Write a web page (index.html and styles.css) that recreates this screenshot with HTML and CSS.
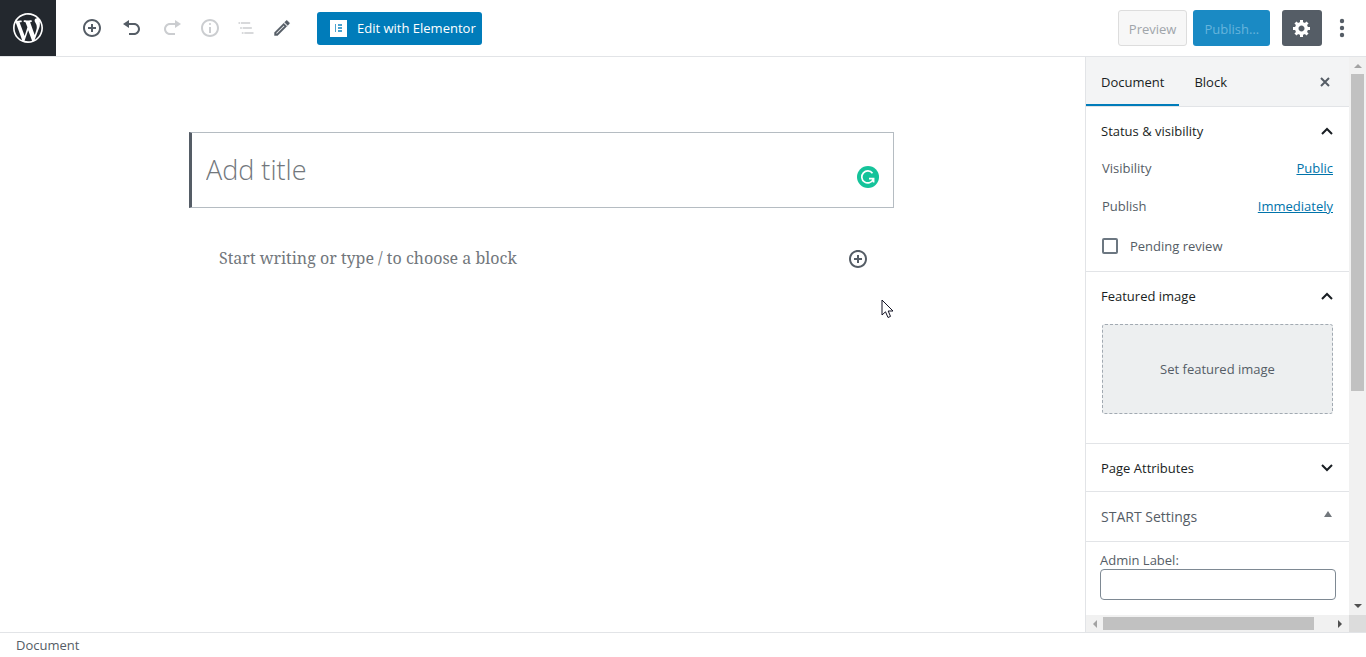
FILE: index.html
```html
<!DOCTYPE html>
<html lang="en">
<head>
    <meta charset="UTF-8">
    <meta name="viewport" content="width=device-width, initial-scale=1.0">
    <title>Add New Page</title>
    <link rel="stylesheet" href="styles.css">
</head>
<body>
    <div class="editor">
        <header class="header">
            <a class="wp-logo" href="#" aria-label="View Pages">
                <svg width="36" height="36" viewBox="-2 -2 24 24"><path d="M20 10c0-5.51-4.49-10-10-10C4.48 0 0 4.49 0 10c0 5.52 4.48 10 10 10 5.51 0 10-4.48 10-10zM7.78 15.37L4.37 6.22c.55-.02 1.17-.08 1.17-.08.5-.06.44-1.13-.06-1.11 0 0-1.45.11-2.37.11-.18 0-.37 0-.58-.01C4.12 2.69 6.87 1.11 10 1.11c2.33 0 4.45.87 6.05 2.34-.68-.11-1.65.39-1.65 1.58 0 .74.45 1.36.9 2.1.35.61.55 1.36.55 2.46 0 1.49-1.4 5-1.4 5l-3.03-8.37c.54-.02.82-.17.82-.17.5-.05.44-1.25-.06-1.22 0 0-1.44.12-2.38.12-.87 0-2.33-.12-2.33-.12-.5-.03-.56 1.2-.06 1.22l.92.08 1.26 3.41zM17.41 10c.24-.64.74-1.87.43-4.25.7 1.29 1.05 2.71 1.05 4.25 0 3.29-1.73 6.24-4.4 7.78.97-2.59 1.94-5.2 2.92-7.78zM6.1 18.09C3.12 16.65 1.11 13.53 1.11 10c0-1.3.23-2.48.72-3.59C3.25 10.3 4.67 14.2 6.1 18.09zm4.03-6.63l2.58 6.98c-.86.29-1.76.45-2.71.45-.79 0-1.57-.11-2.29-.33.81-2.38 1.62-4.74 2.42-7.1z"/></svg>
            </a>
            <div class="toolbar">
                <div class="history">
                    <button class="icon-button" aria-label="Add block">
                        <svg width="20" height="20" viewBox="0 0 20 20"><path d="M10 1c-5 0-9 4-9 9s4 9 9 9 9-4 9-9-4-9-9-9zm0 16c-3.9 0-7-3.1-7-7s3.1-7 7-7 7 3.1 7 7-3.1 7-7 7zm1-11H9v3H6v2h3v3h2v-3h3V9h-3V6z"/></svg>
                    </button>
                    <button class="icon-button" aria-label="Undo">
                        <svg width="20" height="20" viewBox="0 0 20 20"><path d="M12 5H7V2L1 6l6 4V7h5c2.200 0 4 1.800 4 4s-1.800 4-4 4H7v2h5c3.300 0 6-2.700 6-6s-2.700-6-6-6z"/></svg>
                    </button>
                    <button class="icon-button" aria-label="Redo" disabled>
                        <svg width="20" height="20" viewBox="0 0 20 20"><path d="M8 5h5V2l6 4-6 4V7H8c-2.200 0-4 1.800-4 4s1.800 4 4 4h5v2H8c-3.300 0-6-2.700-6-6s2.700-6 6-6z"/></svg>
                    </button>
                </div>
                <div class="tools">
                    <button class="icon-button" aria-label="Content structure" disabled>
                        <svg width="20" height="20" viewBox="0 0 20 20"><path d="M9 15h2V9H9v6zm1-10c-.5 0-1 .5-1 1s.5 1 1 1 1-.5 1-1-.5-1-1-1zm0-4c-5 0-9 4-9 9s4 9 9 9 9-4 9-9-4-9-9-9zm0 16c-3.9 0-7-3.1-7-7s3.1-7 7-7 7 3.1 7 7-3.1 7-7 7z"/></svg>
                    </button>
                    <button class="icon-button" aria-label="Block navigation" disabled>
                        <svg width="20" height="20" viewBox="0 0 24 24"><path d="M5 5H3v2h2V5zm3 8h11v-2H8v2zm9-8H6v2h11V5zM7 11H5v2h2v-2zm0 8h2v-2H7v2zm3-2v2h11v-2H10z"/></svg>
                    </button>
                    <button class="icon-button" aria-label="Modes">
                        <svg width="20" height="20" viewBox="0 0 24 24"><path stroke="currentColor" stroke-width=".5" d="M14.060 9.020l.92.92L5.920 19H5v-.92l9.060-9.060M17.660 3c-.25 0-.51.1-.7.29l-1.830 1.830 3.750 3.750 1.830-1.830c.39-.39.39-1.020 0-1.410l-2.340-2.340c-.2-.2-.45-.29-.71-.29zm-3.600 3.190L3 17.250V21h3.750L17.810 9.940l-3.750-3.750z"/></svg>
                    </button>
                </div>
                <button class="button button-elementor">
                    <svg width="17" height="17" viewBox="0 0 17 17"><path fill="#fff" d="M0 0h17v17H0z"/><path fill="#4ba3cf" d="M5 4h1v8H5zM8 4h4v2H8zM8 7h4v2H8zM8 10h4v2H8z"/></svg>
                    Edit with Elementor
                </button>
            </div>
            <div class="settings">
                <button class="button button-preview" disabled>Preview</button>
                <button class="button button-publish" disabled>Publish…</button>
                <button class="button-gear" aria-label="Settings">
                    <svg width="20" height="20" viewBox="0 0 20 20"><path d="M18 12h-2.180c-.17.7-.44 1.350-.81 1.930l1.540 1.540-2.100 2.100-1.540-1.540c-.58.36-1.230.63-1.910.79V19H8v-2.180c-.68-.16-1.330-.43-1.910-.79l-1.540 1.540-2.120-2.120 1.540-1.540c-.36-.58-.63-1.230-.79-1.910H1V9.030h2.170c.16-.7.44-1.350.8-1.940L2.430 5.550l2.100-2.100 1.540 1.540c.58-.37 1.240-.64 1.930-.81V2h3v2.180c.68.16 1.330.43 1.910.79l1.540-1.540 2.120 2.120-1.540 1.540c.36.59.64 1.240.8 1.940H18V12zm-8.500 1.500c1.660 0 3-1.340 3-3s-1.340-3-3-3-3 1.340-3 3 1.340 3 3 3z"/></svg>
                </button>
                <button class="button-more" aria-label="More tools &amp; options">
                    <svg width="6" height="20" viewBox="0 0 6 20"><circle cx="3" cy="3" r="2.200"/><circle cx="3" cy="10" r="2.200"/><circle cx="3" cy="17" r="2.200"/></svg>
                </button>
            </div>
        </header>

        <div class="body">
            <main class="content">
                <div class="title-box">
                    <input class="title-input" type="text" placeholder="Add title" aria-label="Add title">
                    <svg class="grammarly" width="22" height="22" viewBox="0 0 22 22"><circle cx="11" cy="11" r="11" fill="#15c39a"/><path fill="none" stroke="#fff" stroke-width="1.700" d="M15.500 7.200A6 6 0 1 0 16.200 13.500M12 12.600h4.600v4"/></svg>
                </div>
                <div class="appender">
                    <input class="appender-input" type="text" placeholder="Start writing or type / to choose a block" aria-label="Add block">
                    <button class="icon-button" aria-label="Add block">
                        <svg width="20" height="20" viewBox="0 0 20 20"><path d="M10 1c-5 0-9 4-9 9s4 9 9 9 9-4 9-9-4-9-9-9zm0 16c-3.9 0-7-3.1-7-7s3.1-7 7-7 7 3.1 7 7-3.1 7-7 7zm1-11H9v3H6v2h3v3h2v-3h3V9h-3V6z"/></svg>
                    </button>
                </div>
            </main>

            <aside class="sidebar">
                <div class="sidebar-inner">
                    <div class="tabs">
                        <button class="tab active">Document</button>
                        <button class="tab">Block</button>
                        <button class="close" aria-label="Close settings">
                            <svg width="12" height="12" viewBox="0 0 12 12"><path d="M2 2l8 8M10 2l-8 8"/></svg>
                        </button>
                    </div>

                    <section class="panel">
                        <button class="panel-title">Status &amp; visibility
                            <svg class="chevron" width="14" height="10" viewBox="0 0 14 10"><path d="M2 8l5-5 5 5"/></svg>
                        </button>
                        <div class="row"><span>Visibility</span><a href="#">Public</a></div>
                        <div class="row"><span>Publish</span><a href="#">Immediately</a></div>
                        <div class="check-row">
                            <input type="checkbox" id="pending">
                            <label for="pending">Pending review</label>
                        </div>
                    </section>

                    <section class="panel panel-image">
                        <button class="panel-title">Featured image
                            <svg class="chevron" width="14" height="10" viewBox="0 0 14 10"><path d="M2 8l5-5 5 5"/></svg>
                        </button>
                        <button class="set-image">Set featured image</button>
                    </section>

                    <section class="panel">
                        <button class="panel-title">Page Attributes
                            <svg class="chevron" width="14" height="10" viewBox="0 0 14 10"><path d="M2 2l5 5 5-5"/></svg>
                        </button>
                    </section>

                    <section class="panel">
                        <button class="panel-title metabox-title">START Settings
                            <svg class="toggle" width="8" height="6" viewBox="0 0 8 6"><path d="M4 0l4 6H0z"/></svg>
                        </button>
                    </section>
                    <div class="metabox">
                        <label for="admin-label">Admin Label:</label>
                        <input type="text" id="admin-label">
                    </div>
                </div>

                <!-- scrollbars -->
                <div class="scroll-y">
                    <svg width="8" height="4" viewBox="0 0 8 4"><path fill="#a3a3a3" d="M4 0l4 4H0z"/></svg>
                    <div class="track"><div class="thumb"></div></div>
                    <svg width="8" height="4" viewBox="0 0 8 4"><path fill="#505050" d="M0 0h8L4 4z"/></svg>
                </div>
                <div class="scroll-x">
                    <svg width="4" height="8" viewBox="0 0 4 8"><path fill="#a3a3a3" d="M4 0v8L0 4z"/></svg>
                    <div class="track"><div class="thumb"></div></div>
                    <svg width="4" height="8" viewBox="0 0 4 8"><path fill="#505050" d="M0 0l4 4-4 4z"/></svg>
                </div>
                <div class="corner"></div>
            </aside>
        </div>

        <footer class="footer">Document</footer>
    </div>
    <svg class="cursor" width="13" height="20" viewBox="0 0 13 20"><path fill="#fff" stroke="#111122" d="M1 1v15l3.500-3.200L7 18.500l2.500-1.100L7.200 12H12z"/></svg>
</body>
</html>
```
FILE: styles.css
```css
* {
    box-sizing: border-box;
}

body {
    margin: 0;
    font-family: "Open Sans", "Noto Sans", sans-serif;
    font-size: 13px;
    line-height: 18px;
    color: #555d66;
    background: #fff;
}

button,
input {
    margin: 0;
    padding: 0;
    border: none;
    background: none;
    font: inherit;
    color: inherit;
}

svg {
    display: block;
    flex: none;
    fill: currentColor;
}

a {
    color: #0073aa;
}

.editor {
    display: flex;
    flex-direction: column;
    height: 100vh;
}

/* Header */
.header {
    display: flex;
    align-items: center;
    justify-content: space-between;
    height: 57px;
    border-bottom: 1px solid #e2e4e7;
}

.wp-logo {
    display: flex;
    align-items: center;
    justify-content: center;
    width: 56px;
    height: 56px;
    background: #23282e;
    color: #fff;
}

.toolbar {
    display: flex;
    align-items: center;
    flex: 1;
    padding-left: 18px;
}

.history {
    display: flex;
    gap: 4px;
    margin-right: 2px;
}

.tools {
    display: flex;
    margin-right: 17px;
}

.icon-button {
    display: flex;
    align-items: center;
    justify-content: center;
    width: 36px;
    height: 36px;
    color: #555d66;
}

.icon-button:disabled {
    opacity: 0.3;
}

.button {
    display: flex;
    align-items: center;
    border-radius: 3px;
    white-space: nowrap;
}

.button-elementor {
    gap: 10px;
    height: 33px;
    padding: 0 6px 0 13px;
    background: #007cba;
    color: #fff;
}

.settings {
    display: flex;
    align-items: center;
}

.button-preview,
.button-publish {
    height: 36px;
    padding: 2px 11px 0;
    margin-right: 6px;
}

.button-preview {
    padding: 2px 10px 0;
    border: 1px solid #ddd;
    background: #f7f7f7;
    color: #a0a5aa;
}

.button-publish {
    margin-right: 12px;
    background: #1a8ac4;
    color: #66b4dc;
}

.button-gear {
    display: flex;
    align-items: center;
    justify-content: center;
    width: 40px;
    height: 36px;
    border-radius: 3px;
    background: #555d66;
    color: #fff;
}

.button-more {
    display: flex;
    justify-content: center;
    width: 40px;
    margin-right: 4px;
}

/* Content */
.body {
    display: flex;
    flex: 1;
    min-height: 0;
}

.content {
    flex: 1;
    padding: 75px 17px 0 15px;
}

.title-box {
    display: flex;
    max-width: 705px;
    height: 76px;
    margin: 0 auto;
    padding: 0 14px;
    border: 1px solid #b5bcc2;
    border-left: 3px solid #555d66;
}

.title-input {
    flex: 1;
    padding-bottom: 2px;
    font-size: 27px;
    font-weight: 300;
}

.title-input::placeholder,
.appender-input::placeholder {
    color: #72777c;
    opacity: 1;
}

.grammarly {
    margin-top: 33px;
}

.appender {
    display: flex;
    align-items: center;
    max-width: 705px;
    margin: 33px auto 0;
    padding: 0 18px 0 30px;
}

.appender-input {
    flex: 1;
    padding-bottom: 2px;
    font-family: "Noto Serif", "Liberation Serif", serif;
    font-size: 16px;
    line-height: 28px;
}

/* Sidebar */
.sidebar {
    display: grid;
    grid-template-columns: 1fr 17px;
    grid-template-rows: minmax(0, 1fr) 17px;
    width: 281px;
    border-left: 1px solid #e2e4e7;
}

.sidebar-inner {
    overflow: hidden;
}

.tabs {
    display: flex;
    height: 50px;
    border-bottom: 1px solid #e2e4e7;
    background: #f3f4f5;
    color: #191e23;
}

.tab {
    padding: 3px 15px 0;
    border-bottom: 2px solid transparent;
}

.tab.active {
    border-bottom-color: #007cba;
    font-weight: 500;
}

.close {
    margin-left: auto;
    padding: 0 18px;
    color: #555d66;
}

.close path {
    fill: none;
    stroke: currentColor;
    stroke-width: 2;
}

.panel {
    border-bottom: 1px solid #e2e4e7;
}

.panel-title {
    display: flex;
    align-items: center;
    justify-content: space-between;
    width: 100%;
    height: 47px;
    padding: 1px 15px 0;
    font-weight: 500;
    text-align: left;
    color: #191e23;
}

.metabox-title {
    height: 49px;
    font-size: 14px;
    color: #555d66;
}

.chevron path {
    fill: none;
    stroke: currentColor;
    stroke-width: 2;
}

.toggle {
    margin: 0 2px 6px 0;
    color: #72777c;
}

.row {
    display: flex;
    justify-content: space-between;
    height: 28px;
    margin-bottom: 10px;
    padding: 5px 16px;
}

.check-row {
    display: flex;
    align-items: center;
    gap: 12px;
    height: 41px;
    padding: 0 16px 9px;
}

.check-row input {
    appearance: none;
    width: 16px;
    height: 16px;
    border: 2px solid #6c7781;
    border-radius: 2px;
}

.panel-image {
    padding-bottom: 29px;
}

.set-image {
    display: block;
    width: calc(100% - 32px);
    height: 90px;
    margin: 5px 16px 0;
    border: 1px dashed #a2aab2;
    border-radius: 3px;
    background: #edeff0;
}

.metabox {
    padding: 9px 13px 0 14px;
}

.metabox label {
    display: block;
}

.metabox input {
    width: 100%;
    height: 31px;
    border: 1px solid #7e8993;
    border-radius: 4px;
}

/* Scrollbars */
.scroll-y,
.scroll-x {
    display: flex;
    align-items: center;
    justify-content: space-between;
    background: #f1f1f1;
}

.scroll-y {
    flex-direction: column;
    padding: 7px 0;
}

.scroll-x {
    padding: 0 7px;
}

.track {
    flex: 1;
}

.scroll-y .track {
    width: 13px;
    margin: 6px 0;
}

.scroll-x .track {
    height: 13px;
    margin: 0 6px;
}

.thumb {
    background: #c1c1c1;
}

.scroll-y .thumb {
    height: 60.5%;
}

.scroll-x .thumb {
    width: 92%;
    height: 100%;
}

.corner {
    background: #dcdcdc;
}

/* Footer */
.footer {
    height: 25px;
    padding: 3px 16px 0;
    border-top: 1px solid #e2e4e7;
}

.cursor {
    position: absolute;
    left: 881px;
    top: 299px;
}
```
